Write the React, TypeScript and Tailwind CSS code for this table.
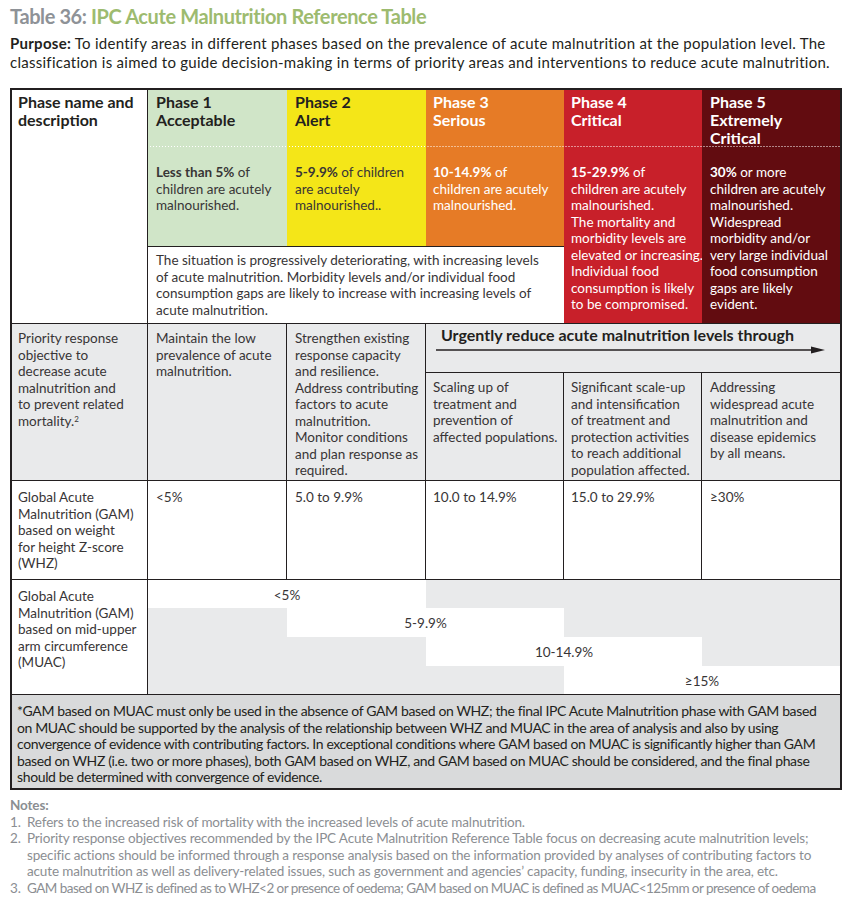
import React from "react";

type L = React.ReactNode[];

function Lines({ lines, className = "" }: { lines: L; className?: string }) {
  return (
    <div className={className}>
      {lines.map((l, i) => (
        <div key={i} className="whitespace-nowrap">
          {l}
        </div>
      ))}
    </div>
  );
}

const B = ({ children }: { children: React.ReactNode }) => (
  <span className="font-bold">{children}</span>
);

const dotWhite =
  "bg-[linear-gradient(to_right,#ffffff_1px,transparent_1px)] bg-[length:3px_1px] bg-repeat-x bg-bottom";
const dotDark =
  "bg-[linear-gradient(to_right,#231f20_1px,transparent_1px)] bg-[length:3px_1px] bg-repeat-x bg-bottom";

const cellText = "text-[13.5px] leading-[16.5px] text-[#383536]";
const head = "text-[16px] leading-[18px] font-bold";
const gray = "bg-[#e9eaeb]";
const bd = "border-[#231f20]";

function MuacRow({
  spans,
}: {
  spans: { w: string; white?: boolean; text?: string }[];
}) {
  return (
    <div className={`flex h-[29px] ${dotDark}`}>
      {spans.map((s, i) => (
        <div
          key={i}
          className={`${s.w} ${s.white ? "bg-white" : gray} flex items-center justify-center pt-[2px] text-[13.5px] text-[#383536]`}
        >
          {s.text}
        </div>
      ))}
    </div>
  );
}

export default function App() {
  return (
    <div className="w-[851px] h-[905px] bg-white px-[10px] pt-[4px] text-[#231f20] font-[family-name:Lato,sans-serif]">
      <div className="text-[20px] leading-[24px] font-bold whitespace-nowrap tracking-[-0.4px]">
        <span className="text-[#8e9297]">Table 36: </span>
        <span className="text-[#9dbb6f]">IPC Acute Malnutrition Reference Table</span>
      </div>
      <div className="mt-[6px] text-[15px] leading-[19px] tracking-[0.27px]">
        <div className="whitespace-nowrap">
          <span className="font-bold">Purpose:</span> To identify areas in different phases based on the prevalence of acute malnutrition at the population level. The
        </div>
        <div className="whitespace-nowrap">
          classification is aimed to guide decision-making in terms of priority areas and interventions to reduce acute malnutrition.
        </div>
      </div>

      <div
        className={`mt-[16px] w-[832px] grid grid-cols-[136px_139px_139px_138px_138px_138px] grid-rows-[57px_99px_78px_49px_108px_99px_115px_93px] border-2 ${bd}`}
      >
        {/* col0 header */}
        <div className={`col-start-1 row-start-1 row-span-3 border-r border-b ${bd} pl-[6px] pt-[3px] ${head}`}>
          <Lines lines={["Phase name and", "description"]} />
        </div>

        {/* phase headers */}
        <div className={`col-start-2 row-start-1 bg-[#d0e5c8] ${dotWhite} pl-2 pt-[3px] ${head} text-[#231f20]`}>
          <Lines lines={["Phase 1", "Acceptable"]} />
        </div>
        <div className={`col-start-3 row-start-1 bg-[#f4e618] ${dotWhite} pl-2 pt-[3px] ${head} text-[#231f20]`}>
          <Lines lines={["Phase 2", "Alert"]} />
        </div>
        <div className={`col-start-4 row-start-1 bg-[#e67b26] ${dotWhite} pl-[7px] pt-[3px] ${head} text-white`}>
          <Lines lines={["Phase 3", "Serious"]} />
        </div>
        <div className={`col-start-5 row-start-1 bg-[#c8202a] ${dotWhite} pl-[7px] pt-[3px] ${head} text-white`}>
          <Lines lines={["Phase 4", "Critical"]} />
        </div>
        <div className={`col-start-6 row-start-1 bg-[#620c10] ${dotWhite} pl-2 pt-[3px] ${head} text-white`}>
          <Lines lines={["Phase 5", "Extremely", "Critical"]} />
        </div>

        {/* descriptions */}
        <div className={`col-start-2 row-start-2 bg-[#d0e5c8] pl-2 pt-[17px] ${cellText} text-[#231f20]`}>
          <Lines lines={[<><B>Less than 5%</B> of</>, "children are acutely", "malnourished."]} />
        </div>
        <div className={`col-start-3 row-start-2 bg-[#f4e618] pl-2 pt-[17px] ${cellText} text-[#231f20]`}>
          <Lines lines={[<><B>5-9.9%</B> of children</>, "are acutely", "malnourished.."]} />
        </div>
        <div className={`col-start-4 row-start-2 bg-[#e67b26] pl-[7px] pt-[17px] ${cellText} !text-white`}>
          <Lines lines={[<><B>10-14.9%</B> of</>, "children are acutely", "malnourished."]} />
        </div>
        <div className={`col-start-5 row-start-2 row-span-2 bg-[#c8202a] border-b ${bd} pl-[7px] pt-[17px] ${cellText} !text-white`}>
          <Lines
            lines={[
              <><B>15-29.9%</B> of</>,
              "children are acutely",
              "malnourished.",
              "The mortality and",
              "morbidity levels are",
              "elevated  or increasing.",
              "Individual food",
              "consumption is likely",
              "to be compromised.",
            ]}
          />
        </div>
        <div className={`col-start-6 row-start-2 row-span-2 bg-[#620c10] border-b ${bd} pl-2 pt-[17px] ${cellText} !text-white`}>
          <Lines
            lines={[
              <><B>30%</B> or more</>,
              "children are acutely",
              "malnourished.",
              "Widespread",
              "morbidity and/or",
              "very large individual",
              "food consumption",
              "gaps are likely",
              "evident.",
            ]}
          />
        </div>

        {/* situation */}
        <div className={`col-start-2 col-span-3 row-start-3 border-t border-b ${bd} bg-white pl-2 pt-[5px] ${cellText}`}>
          <Lines
            lines={[
              "The situation is progressively deteriorating, with increasing levels",
              "of acute malnutrition. Morbidity levels and/or individual food",
              "consumption gaps are likely to increase with increasing levels of",
              "acute malnutrition.",
            ]}
          />
        </div>

        {/* priority row */}
        <div className={`col-start-1 row-start-4 row-span-2 ${gray} border-r border-b ${bd} pl-[6px] pt-[6px] ${cellText}`}>
          <Lines
            lines={[
              "Priority response",
              "objective to",
              "decrease acute",
              "malnutrition and",
              "to prevent related",
              <>mortality.<sup className="text-[8px]">2</sup></>,
            ]}
          />
        </div>
        <div className={`col-start-2 row-start-4 row-span-2 ${gray} border-r border-b ${bd} pl-2 pt-[6px] ${cellText}`}>
          <Lines lines={["Maintain the low", "prevalence of acute", "malnutrition."]} />
        </div>
        <div className={`col-start-3 row-start-4 row-span-2 ${gray} border-r border-b ${bd} pl-2 pt-[6px] ${cellText}`}>
          <Lines
            lines={[
              "Strengthen existing",
              "response capacity",
              "and resilience.",
              "Address contributing",
              "factors to acute",
              "malnutrition.",
              "Monitor conditions",
              "and plan response as",
              "required.",
            ]}
          />
        </div>
        <div className={`col-start-4 col-span-3 row-start-4 ${gray} border-b ${bd} pt-[2px]`}>
          <div className={`pl-[15px] ${head} text-[#231f20] whitespace-nowrap`}>
            Urgently reduce acute malnutrition levels through
          </div>
          <svg className="ml-[10px] mt-[1px]" width="390" height="10" viewBox="0 0 390 10">
            <line x1="0" y1="5" x2="380" y2="5" stroke="#231f20" strokeWidth="1.6" />
            <polygon points="375,1.5 389,5 375,8.5" fill="#231f20" />
          </svg>
        </div>
        <div className={`col-start-4 row-start-5 ${gray} border-r border-b ${bd} pl-[7px] pt-[6px] ${cellText}`}>
          <Lines lines={["Scaling up of", "treatment and", "prevention of", "affected populations."]} />
        </div>
        <div className={`col-start-5 row-start-5 ${gray} border-r border-b ${bd} pl-[7px] pt-[6px] ${cellText}`}>
          <Lines
            lines={[
              "Significant scale-up",
              "and intensification",
              "of treatment and",
              "protection activities",
              "to reach additional",
              "population affected.",
            ]}
          />
        </div>
        <div className={`col-start-6 row-start-5 ${gray} border-b ${bd} pl-2 pt-[6px] ${cellText}`}>
          <Lines lines={["Addressing", "widespread acute", "malnutrition and", "disease epidemics", "by all means."]} />
        </div>

        {/* WHZ row */}
        <div className={`col-start-1 row-start-6 border-r border-b ${bd} pl-[6px] pt-[8px] ${cellText}`}>
          <Lines lines={["Global Acute", "Malnutrition (GAM)", "based on weight", "for height Z-score", "(WHZ)"]} />
        </div>
        {["<5%", "5.0 to 9.9%", "10.0 to 14.9%", "15.0 to 29.9%", "≥30%"].map((t, i) => (
          <div
            key={t}
            className={`row-start-6 border-b ${i < 4 ? "border-r" : ""} ${bd} ${i >= 2 && i <= 3 ? "pl-[7px]" : "pl-2"} pt-[8px] ${cellText}`}
          >
            {t}
          </div>
        ))}

        {/* MUAC row */}
        <div className={`col-start-1 row-start-7 border-r border-b ${bd} pl-[6px] pt-[8px] ${cellText}`}>
          <Lines
            lines={["Global Acute", "Malnutrition (GAM)", "based on mid-upper", "arm circumference", "(MUAC)"]}
          />
        </div>
        <div className={`col-start-2 col-span-5 row-start-7 border-b ${bd} flex flex-col`}>
          <div className={`flex h-[28px] ${dotDark}`}>
            <div className="w-[278px] bg-white flex items-center justify-center pt-[2px] text-[13.5px] text-[#383536]">&lt;5%</div>
            <div className={`w-[414px] ${gray}`} />
          </div>
          <MuacRow
            spans={[
              { w: "w-[139px]" },
              { w: "w-[277px]", white: true, text: "5-9.9%" },
              { w: "w-[276px]" },
            ]}
          />
          <MuacRow
            spans={[
              { w: "w-[278px]" },
              { w: "w-[276px]", white: true, text: "10-14.9%" },
              { w: "w-[138px]" },
            ]}
          />
          <div className="flex h-[28px]">
            <div className={`w-[416px] ${gray}`} />
            <div className="w-[276px] bg-white flex items-center justify-center pt-[2px] text-[13.5px] text-[#383536]">≥15%</div>
          </div>
        </div>

        {/* footnote */}
        <div className="col-start-1 col-span-6 row-start-8 bg-[#d9dadb] pl-[5px] pt-[8px] text-[14px] leading-[16.6px] text-[#231f20] tracking-[-0.37px]">
          <Lines
            lines={[
              "*GAM based on MUAC must only be used in the absence of GAM based on WHZ; the final IPC Acute Malnutrition phase with GAM based",
              "on MUAC should be supported by the analysis of the relationship between WHZ and MUAC in the area of analysis and also by using",
              "convergence of evidence with contributing factors. In exceptional conditions where GAM based on MUAC is significantly higher than GAM",
              "based on WHZ (i.e. two or more phases), both GAM based on WHZ, and GAM based on MUAC should be considered, and the final phase",
              "should be determined with convergence of evidence.",
            ]}
          />
        </div>
      </div>

      {/* notes */}
      <div className="mt-[7px] text-[13.5px] leading-[16.5px] text-[#8b8e92] tracking-[-0.15px]">
        <div className="font-bold">Notes:</div>
        <div className="flex">
          <div className="w-[17px] shrink-0">1.</div>
          <div className="whitespace-nowrap">Refers to the increased risk of mortality with the increased levels of acute malnutrition.</div>
        </div>
        <div className="flex">
          <div className="w-[17px] shrink-0">2.</div>
          <Lines
            lines={[
              "Priority response objectives recommended by the IPC Acute Malnutrition Reference Table focus on decreasing acute malnutrition levels;",
              "specific actions should be informed through a response analysis based on the information provided by analyses of contributing factors to",
              "acute malnutrition as well as delivery-related issues, such as government and agencies’ capacity, funding, insecurity in the area, etc.",
            ]}
          />
        </div>
        <div className="flex">
          <div className="w-[17px] shrink-0">3.</div>
          <div className="whitespace-nowrap tracking-[-0.55px]">
            GAM based on WHZ is defined as to WHZ&lt;2 or presence of oedema; GAM based on MUAC is defined as MUAC&lt;125mm or presence of oedema
          </div>
        </div>
      </div>
    </div>
  );
}
